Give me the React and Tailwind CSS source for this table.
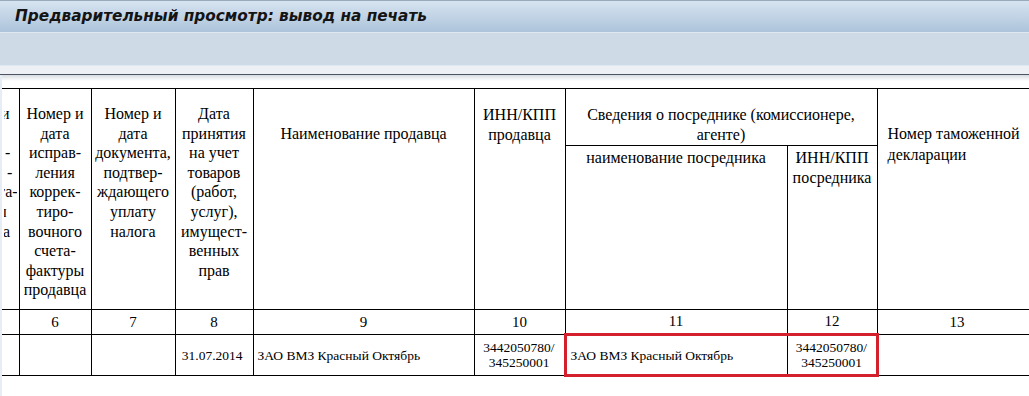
import React from 'react';

const serif = "font-['Liberation_Serif','Times_New_Roman',serif]";

const Lines = ({ lines }) => (
    <>
        {lines.map((l, i) => (
            <span key={i} className="block whitespace-nowrap">{l}</span>
        ))}
    </>
);

// clipped tail of the previous column (only its right edge is visible)
const clipped = [
    { t: 'и', ml: 'ml-[-3px]' },
    { t: '', ml: '' },
    { t: '-', ml: 'ml-[1px]' },
    { t: '-', ml: 'ml-[3px]' },
    { t: 'та-', ml: 'ml-[-6px]' },
    { t: 'ы', ml: 'ml-[-8px]' },
    { t: 'а', ml: 'ml-[-1px]' },
];

const App = () => {
    const th = "border border-black align-top text-center font-normal text-[16px] leading-[19.6px] px-[2px]";
    const num = "border border-black text-center text-[15px] align-middle";
    const td = "border border-black align-middle text-[13.5px] leading-[15px]";

    return (
        <div className="h-[396px] w-[1029px] overflow-hidden bg-white flex flex-col">
            {/* title */}
            <div className="h-[32px] shrink-0 border-t border-[#9aa9bc] bg-linear-to-b from-[#d7e3f0] to-[#adc4db] flex items-center pl-[15px]">
                <h1 className="font-['DejaVu_Sans',sans-serif] font-bold italic text-[15.3px] text-[#141414]">
                    Предварительный просмотр: вывод на печать
                </h1>
            </div>
            {/* toolbar */}
            <div className="h-[34px] shrink-0 bg-[#cedbe6] border-t border-[#dfe8f1] border-b border-[#9eb0c1]"></div>
            <div className="h-[9px] shrink-0 bg-[#edf1f6] border-b border-[#4b5460]"></div>

            <div className="flex flex-1 min-h-0">
                <div className="w-[2px] shrink-0 bg-[#e6edf4]"></div>
                <div className="flex-1 overflow-hidden relative pt-[13px]">
                    <div className="absolute left-0 right-0 top-0 h-[6px] bg-linear-to-b from-[#d8dce1] to-white"></div>
                    <table className={`relative border-collapse table-fixed w-[1075px] text-black ${serif}`}>
                        <colgroup>
                            <col className="w-[17px]" />
                            <col className="w-[72px]" />
                            <col className="w-[84px]" />
                            <col className="w-[78px]" />
                            <col className="w-[221px]" />
                            <col className="w-[91px]" />
                            <col className="w-[222px]" />
                            <col className="w-[90px]" />
                            <col className="w-[200px]" />
                        </colgroup>
                        <thead>
                            <tr className="h-[57px]">
                                <th rowSpan={2} className={`${th} border-l-0 px-0 pt-[15px] text-left`}>
                                    <div className="overflow-hidden">
                                        {clipped.map((c, i) => (
                                            <span key={i} className={`block whitespace-nowrap h-[19.6px] ${c.ml}`}>{c.t}</span>
                                        ))}
                                    </div>
                                </th>
                                <th rowSpan={2} className={`${th} pt-[15px]`}>
                                    <Lines lines={['Номер и', 'дата', 'исправ-', 'ления', 'коррек-', 'тиро-', 'вочного', 'счета-', 'фактуры', 'продавца']} />
                                </th>
                                <th rowSpan={2} className={`${th} pt-[15px]`}>
                                    <Lines lines={['Номер и', 'дата', 'документа,', 'подтвер-', 'ждающего', 'уплату', 'налога']} />
                                </th>
                                <th rowSpan={2} className={`${th} pt-[15px]`}>
                                    <Lines lines={['Дата', 'принятия', 'на учет', 'товаров', '(работ,', 'услуг),', 'имущест-', 'венных', 'прав']} />
                                </th>
                                <th rowSpan={2} className={`${th} pt-[35px]`}>
                                    <Lines lines={['Наименование продавца']} />
                                </th>
                                <th rowSpan={2} className={`${th} pt-[16px]`}>
                                    <Lines lines={['ИНН/КПП', 'продавца']} />
                                </th>
                                <th colSpan={2} className={`${th} pt-[16px]`}>
                                    <Lines lines={['Сведения о посреднике (комиссионере,', 'агенте)']} />
                                </th>
                                <th rowSpan={2} className={`${th} border-r-0 text-left pl-[10px] pt-[34px] leading-[21px]`}>
                                    <Lines lines={['Номер таможенной', 'декларации']} />
                                </th>
                            </tr>
                            <tr className="h-[164px]">
                                <th className={`${th} pt-[2px]`}>
                                    <Lines lines={['наименование посредника']} />
                                </th>
                                <th className={`${th} pt-[2px]`}>
                                    <Lines lines={['ИНН/КПП', 'посредника']} />
                                </th>
                            </tr>
                        </thead>
                        <tbody>
                            <tr className="h-[25px]">
                                <td className={`${num} border-l-0`}></td>
                                <td className={num}>6</td>
                                <td className={num}>7</td>
                                <td className={num}>8</td>
                                <td className={num}>9</td>
                                <td className={num}>10</td>
                                <td className={num}>11</td>
                                <td className={num}>12</td>
                                <td className={`${num} border-r-0 text-left pl-[72px]`}>13</td>
                            </tr>
                            <tr className="h-[41px]">
                                <td className={`${td} border-l-0`}></td>
                                <td className={td}></td>
                                <td className={td}></td>
                                <td className={`${td} text-right pr-[10px]`}>31.07.2014</td>
                                <td className={`${td} pl-[4px]`}>ЗАО ВМЗ Красный Октябрь</td>
                                <td className={`${td} text-center`}>3442050780/<br />345250001</td>
                                <td className={`${td} pl-[4px] border-l-[3px] border-t-[3px] border-b-[3px] border-l-[#d3202c] border-t-[#d3202c] border-b-[#d3202c]`}>
                                    ЗАО ВМЗ Красный Октябрь
                                </td>
                                <td className={`${td} text-center border-r-[3px] border-t-[3px] border-b-[3px] border-r-[#d3202c] border-t-[#d3202c] border-b-[#d3202c]`}>
                                    3442050780/<br />345250001
                                </td>
                                <td className={`${td} border-r-0`}></td>
                            </tr>
                        </tbody>
                    </table>
                </div>
            </div>
        </div>
    );
};

export default App;
